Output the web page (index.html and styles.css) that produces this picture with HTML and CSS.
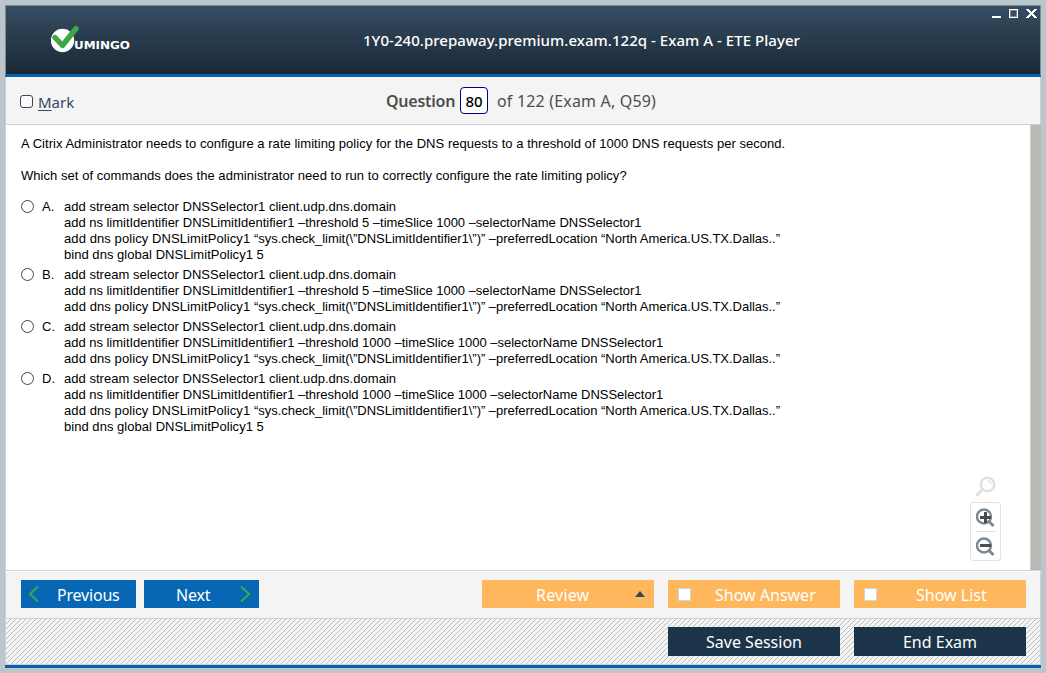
FILE: index.html
```html
<!DOCTYPE html>
<html lang="en">
<head>
<meta charset="utf-8">
<title>Exam Player</title>
<link rel="stylesheet" href="styles.css">
</head>
<body>
<div class="window">
  <header class="titlebar">
    <svg class="logo" width="82" height="30" viewBox="0 0 82 30">
      <circle cx="11.500" cy="15.500" r="11.700" fill="#fff"/>
      <path d="M4 12.500L11.500 20.500L25 3.500" fill="none" stroke="#3fa645" stroke-width="5.400" stroke-linecap="round" stroke-linejoin="round"/>
      <text class="logo-text" x="23" y="24" textLength="56" lengthAdjust="spacingAndGlyphs">UMINGO</text>
    </svg>
    <h1 class="title"><span class="title-text">1Y0-240.prepaway.premium.exam.122q - Exam A - ETE Player</span></h1>
    <svg class="controls" width="48" height="14" viewBox="0 0 48 14" shape-rendering="crispEdges">
      <rect x="2" y="10" width="9" height="2" fill="#fff"/>
      <rect x="19.500" y="3.500" width="8" height="8" fill="#3a4b5a" stroke="#fff"/>
      <rect x="20.500" y="4.500" width="6" height="6" fill="none" stroke="#8b8682"/>
      <path d="M36.500 3L46.500 12M46.500 3L36.500 12" stroke="#fff" stroke-width="2"/>
    </svg>
  </header>
  <div class="question-bar">
    <label class="mark"><span class="mark-box"></span><span class="mark-text"><u>M</u>ark</span></label>
    <div class="counter"><b class="q-word">Question</b><span class="q-num">80</span><span class="q-rest">of 122 (Exam A, Q59)</span></div>
  </div>
  <main class="content">
    <div class="body">
      <p class="line l1">A Citrix Administrator needs to configure a rate limiting policy for the DNS requests to a threshold of 1000 DNS requests per second.</p>
      <p class="line l2">Which set of commands does the administrator need to run to correctly configure the rate limiting policy?</p>
      <div class="option"><span class="radio"></span><span class="letter">A.</span><div class="cmds">
        <p class="c1">add stream selector DNSSelector1 client.udp.dns.domain</p>
        <p class="c2">add ns limitIdentifier DNSLimitIdentifier1 –threshold 5 –timeSlice 1000 –selectorName DNSSelector1</p>
        <p class="c3"><span class="c3-head">add dns policy DNSLimitPolicy1 </span>“sys.check_limit(\”DNSLimitIdentifier1\”)” –preferredLocation “North America.US.TX.Dallas..”</p>
        <p class="c4">bind dns global DNSLimitPolicy1 5</p></div></div>
      <div class="option"><span class="radio"></span><span class="letter">B.</span><div class="cmds">
        <p class="c1">add stream selector DNSSelector1 client.udp.dns.domain</p>
        <p class="c2">add ns limitIdentifier DNSLimitIdentifier1 –threshold 5 –timeSlice 1000 –selectorName DNSSelector1</p>
        <p class="c3"><span class="c3-head">add dns policy DNSLimitPolicy1 </span>“sys.check_limit(\”DNSLimitIdentifier1\”)” –preferredLocation “North America.US.TX.Dallas..”</p></div></div>
      <div class="option"><span class="radio"></span><span class="letter">C.</span><div class="cmds">
        <p class="c1">add stream selector DNSSelector1 client.udp.dns.domain</p>
        <p class="c2">add ns limitIdentifier DNSLimitIdentifier1 –threshold 1000 –timeSlice 1000 –selectorName DNSSelector1</p>
        <p class="c3"><span class="c3-head">add dns policy DNSLimitPolicy1 </span>“sys.check_limit(\”DNSLimitIdentifier1\”)” –preferredLocation “North America.US.TX.Dallas..”</p></div></div>
      <div class="option"><span class="radio"></span><span class="letter">D.</span><div class="cmds">
        <p class="c1">add stream selector DNSSelector1 client.udp.dns.domain</p>
        <p class="c2">add ns limitIdentifier DNSLimitIdentifier1 –threshold 1000 –timeSlice 1000 –selectorName DNSSelector1</p>
        <p class="c3"><span class="c3-head">add dns policy DNSLimitPolicy1 </span>“sys.check_limit(\”DNSLimitIdentifier1\”)” –preferredLocation “North America.US.TX.Dallas..”</p>
        <p class="c4">bind dns global DNSLimitPolicy1 5</p></div></div>
    </div>
    <div class="scrollbar"></div>
    <div class="zoom-tools">
      <svg class="zoom-reset" width="22" height="22" viewBox="0 0 22 22" fill="none" stroke="#e0e0e0">
        <circle cx="13.500" cy="8.500" r="6.700" stroke-width="2.400"/>
        <path d="M13.500 5Q17 5 17 8.500" stroke-width="1.300"/>
        <path d="M8.500 13.500L3 19" stroke-width="3" stroke-linecap="round"/>
      </svg>
      <div class="zoom-box">
        <svg width="20" height="20" viewBox="0 0 20 20" fill="none" stroke="#7a8993">
          <circle cx="8" cy="8.500" r="7" stroke-width="2.400"/><path d="M12.500 13L17.500 18" stroke-width="3"/>
          <path d="M4 9.500H15M9.500 4V15" stroke="#4b4b4b" stroke-width="3"/>
        </svg>
        <span class="zoom-sep"></span>
        <svg width="20" height="20" viewBox="0 0 20 20" fill="none" stroke="#7a8993">
          <circle cx="8" cy="8.500" r="7" stroke-width="2.400"/><path d="M12.500 13L17.500 18" stroke-width="3"/>
          <path d="M4 8.500H15" stroke="#4b4b4b" stroke-width="3"/>
        </svg>
      </div>
    </div>
  </main>
  <div class="nav-bar">
    <button class="btn nav prev"><svg width="12" height="16" viewBox="0 0 12 16"><path d="M10 0.500L2 8L10 15.500" fill="none" stroke="#41a649" stroke-width="2"/></svg><span class="t-prev">Previous</span></button>
    <button class="btn nav next"><span class="t-next">Next</span><svg width="12" height="16" viewBox="0 0 12 16"><path d="M2 0.500L10 8L2 15.500" fill="none" stroke="#41a649" stroke-width="2"/></svg></button>
    <button class="btn orange review"><span class="t-review">Review</span><i class="arrow"></i></button>
    <button class="btn orange"><i class="check"></i><span class="t-answer">Show Answer</span></button>
    <button class="btn orange"><i class="check"></i><span class="t-list">Show List</span></button>
  </div>
  <footer class="session-bar">
    <button class="btn dark"><span class="t-save">Save Session</span></button>
    <button class="btn dark"><span class="t-end">End Exam</span></button>
  </footer>
</div>
</body>
</html>
```
FILE: styles.css
```css
* { box-sizing: border-box; }
body { margin: 0; padding: 5px; width: 1046px; height: 673px; background: #bac6cc; overflow: hidden; font-family: "Noto Sans", sans-serif; }
p, h1 { margin: 0; }
.window { width: 1036px; height: 663px; display: flex; flex-direction: column; background: #f4f4f4; border-bottom: 3px solid #0463b1; }
.titlebar { height: 72px; display: flex; background: linear-gradient(#364d62, #1a2835); border: 1px solid #808b90; border-bottom: 3px solid #0463b1; }
.logo { margin: 19px 0 0 45px; width: 82px; flex: none; }
.logo-text { font: bold 10px "DejaVu Sans", sans-serif; fill: #fff; }
.title { flex: 1; margin: 24px 0 0 230px; font-size: 15px; line-height: 20px; font-weight: 500; letter-spacing: 0.04px; color: #fff; white-space: nowrap; }
.controls { flex: none; margin: 0 2px 0 0; }
.question-bar { height: 48px; display: flex; border: 1px solid #d0d0d0; border-top: 0; color: #4d4d4d; }
.mark { display: flex; width: 380px; padding: 18px 0 0 14px; color: #34495e; }
.mark-box { width: 13px; height: 13px; border: 1px solid #34495e; border-radius: 3px; background: #fafafa; }
.mark-text { margin: -3px 0 0 5px; font-size: 15px; line-height: 20px; }
.mark u { text-underline-offset: 2px; }
.counter { display: flex; padding-top: 10px; font-size: 16px; line-height: 28px; white-space: nowrap; }
.q-word { font-weight: 600; width: 74px; letter-spacing: -0.25px; }
.q-num { width: 28px; height: 27px; border: 1px solid #000080; border-radius: 4px; background: #fff; color: #000; text-align: center; font-weight: 500; font-size: 15px; line-height: 26px; }
.q-rest { margin-left: 9px; letter-spacing: 0.18px; }
.content { height: 446px; display: flex; position: relative; background: #fff; border-bottom: 1px solid #d0d0d0; border-left: 1px solid #d0d0d0; }
.body { flex: 1; padding: 11px 0 0 15px; border-right: 1px solid #d0d0d0; font: 13px/16px "Liberation Sans", Arial, sans-serif; color: #000; white-space: nowrap; }
.line { margin-bottom: 16px; }
.l1 { letter-spacing: 0.036px; }
.l2 { margin-bottom: 15px; letter-spacing: 0.05px; }
.c1, .c4 { letter-spacing: 0.035px; }
.c2 { letter-spacing: -0.02px; }
.c3 { letter-spacing: -0.03px; }
.c3-head { letter-spacing: 0.09px; }
.scrollbar { width: 10px; background: #bbb9b5; }
.option { display: flex; margin-bottom: 4px; }
.radio { width: 13px; height: 13px; margin-top: 1px; border: 1px solid #444; border-radius: 50%; }
.letter { width: 22px; margin-left: 8px; }
.zoom-tools { position: absolute; left: 964px; top: 351px; width: 32px; }
.zoom-reset { display: block; margin-left: 4px; }
.zoom-box { display: flex; flex-direction: column; align-items: center; width: 31px; height: 59px; margin-top: 4px; padding-top: 5px; border: 1px solid #e2e2e2; border-radius: 3px; }
.zoom-sep { width: 19px; height: 1px; margin: 3px 0 5px; background: #e0e0e0; }
.zoom-box svg { flex: none; }
.nav-bar { height: 48px; display: flex; padding: 8px 14px 0 15px; border: 1px solid #d0d0d0; border-top: 1px solid #fff; }
.btn { display: flex; align-items: center; height: 28px; border: 0; padding: 0; font: 16px/28px "Noto Sans", sans-serif; color: #fff; white-space: nowrap; }
.nav span, .orange span { padding-top: 2px; }
.nav { width: 115px; background: #0867b5; }
.prev { padding-left: 7px; }
.t-prev { margin-left: 17px; letter-spacing: -0.2px; }
.next { margin-left: 8px; padding-left: 32px; }
.t-next { letter-spacing: -0.2px; }
.next svg { margin-left: auto; margin-right: 8px; }
.orange { width: 172px; margin-left: 14px; background: #ffb75e; }
.review { margin-left: auto; padding-left: 54px; }
.t-review { letter-spacing: 0.2px; }
.arrow { margin-left: auto; margin-right: 9px; border: 5px solid transparent; border-top: 0; border-bottom: 6px solid #34495e; }
.check { width: 13px; height: 13px; margin-left: 10px; border: 1px solid #d5d5d5; background: #fff; }
.t-answer { margin-left: 24px; }
.t-list { margin-left: 39px; }
.session-bar { flex: 1; display: flex; justify-content: flex-end; gap: 14px; padding: 8px 14px 0 0; border: 1px solid #d0d0d0; border-top: 0; background: #f5f5f5 url("data:image/svg+xml,%3Csvg xmlns='http://www.w3.org/2000/svg' width='5' height='5' shape-rendering='crispEdges'%3E%3Cpath fill='%23bcbcbc' d='M4 0h1v1h-1zM3 1h1v1h-1zM2 2h1v1h-1zM1 3h1v1h-1zM0 4h1v1h-1z'/%3E%3C/svg%3E"); }
.dark { width: 172px; height: 29px; justify-content: center; background: #1b344a; }
```
